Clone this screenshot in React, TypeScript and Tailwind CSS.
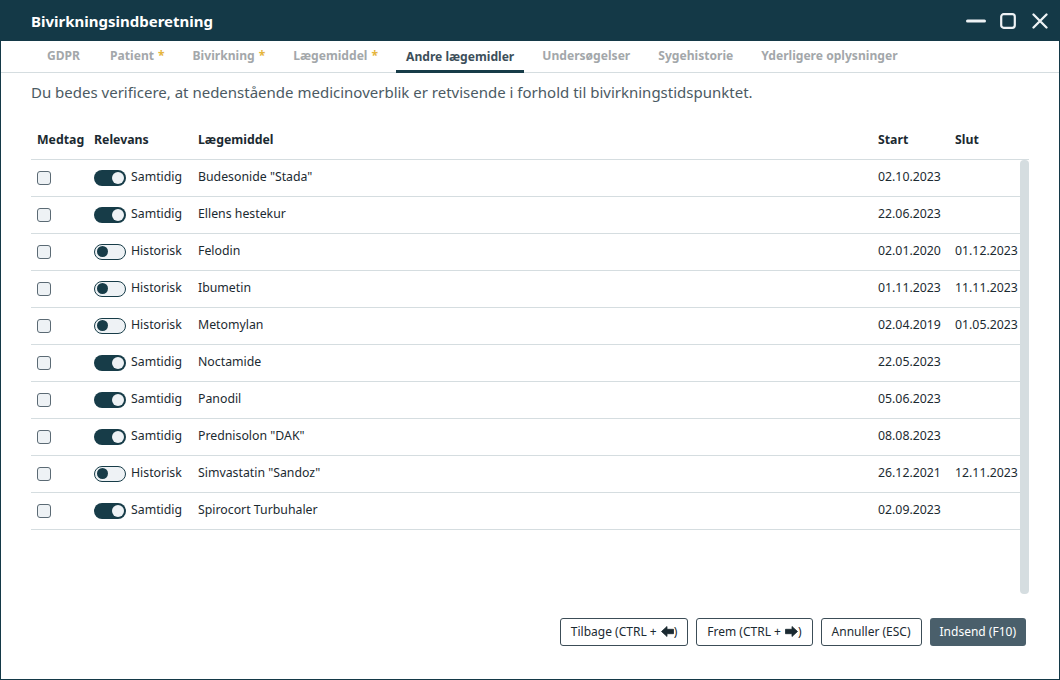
type Row = { name: string; on: boolean; start: string; end?: string };

const rows: Row[] = [
  { name: 'Budesonide "Stada"', on: true, start: "02.10.2023" },
  { name: "Ellens hestekur", on: true, start: "22.06.2023" },
  { name: "Felodin", on: false, start: "02.01.2020", end: "01.12.2023" },
  { name: "Ibumetin", on: false, start: "01.11.2023", end: "11.11.2023" },
  { name: "Metomylan", on: false, start: "02.04.2019", end: "01.05.2023" },
  { name: "Noctamide", on: true, start: "22.05.2023" },
  { name: "Panodil", on: true, start: "05.06.2023" },
  { name: 'Prednisolon "DAK"', on: true, start: "08.08.2023" },
  { name: 'Simvastatin "Sandoz"', on: false, start: "26.12.2021", end: "12.11.2023" },
  { name: "Spirocort Turbuhaler", on: true, start: "02.09.2023" },
];

const tabs = [
  { label: "GDPR" },
  { label: "Patient", req: true },
  { label: "Bivirkning", req: true },
  { label: "Lægemiddel", req: true },
  { label: "Andre lægemidler", active: true },
  { label: "Undersøgelser" },
  { label: "Sygehistorie" },
  { label: "Yderligere oplysninger" },
];

const cols = "grid grid-cols-[57px_104px_1fr_77px_71px]";

const Toggle = ({ on }: { on: boolean }) =>
  on ? (
    <span className="flex h-[16px] w-[32px] items-center justify-end rounded-full bg-[#173c48] pr-[2px]">
      <span className="h-[12px] w-[12px] rounded-full bg-[#eef2f5]" />
    </span>
  ) : (
    <span className="flex h-[16px] w-[32px] items-center rounded-full border border-[#173c48] bg-[#eef2f5] pl-[2px]">
      <span className="h-[11px] w-[11px] rounded-full bg-[#173c48]" />
    </span>
  );

const Arrow = ({ left }: { left?: boolean }) => (
  <svg width="13" height="11" viewBox="0 0 13 11" className={left ? "ml-[4px]" : "ml-[4px] rotate-180"}>
    <path d="M0.5 5.5 L6 0.5 L6 3.3 L12.5 3.3 L12.5 7.7 L6 7.7 L6 10.5 Z" fill="#1b2a31" strokeLinejoin="round" stroke="#1b2a31" strokeWidth="0.8" />
  </svg>
);

export default function App() {
  return (
    <div
      className="flex h-[680px] w-[1060px] flex-col border border-[#143947] bg-white text-[#1b2a31]"
      style={{ fontFamily: '"Segoe UI", "Noto Sans", sans-serif' }}
    >
      <div className="flex h-[40px] shrink-0 items-center justify-between bg-[#143947] pl-[30px] pr-[11px] text-white">
        <span className="text-[15px] font-bold">Bivirkningsindberetning</span>
        <div className="flex items-center">
          <svg width="20" height="20" viewBox="0 0 20 20">
            <path d="M1.5 10h17" stroke="#eef2f5" strokeWidth="3" strokeLinecap="round" />
          </svg>
          <svg width="16" height="16" viewBox="0 0 16 16" className="ml-[14px]">
            <rect x="1.2" y="1.2" width="13.6" height="13.6" rx="2.5" fill="none" stroke="#eef2f5" strokeWidth="2.2" />
          </svg>
          <svg width="16" height="16" viewBox="0 0 16 16" className="ml-[16px]">
            <path d="M1.5 1.5l13 13M14.5 1.5l-13 13" stroke="#eef2f5" strokeWidth="2.3" strokeLinecap="round" />
          </svg>
        </div>
      </div>

      <div className="flex h-[32px] shrink-0 items-stretch gap-[8px] whitespace-nowrap border-b border-[#d5dde0] pl-[36px] pr-[36px] text-[12.1px] font-bold">
        {tabs.map((t, i) => (
          <div
            key={t.label}
            className={
              t.active
                ? "-mb-px flex items-center border-b-[3px] border-[#173c48] px-[10px] pt-[3px] text-[#3d4f5a]"
                : i === 1
                  ? "ml-[2px] flex items-center px-[10px] text-[#a3a7aa]"
                  : "flex items-center px-[10px] text-[#a3a7aa]"
            }
          >
            {t.label}
            {t.req && <span className="ml-[4px] text-[#e5b53c]">*</span>}
          </div>
        ))}
      </div>

      <div className="flex flex-1 flex-col px-[30px]">
        <p className="pt-[8px] text-[15px] text-[#4b5a63]">
          Du bedes verificere, at nedenstående medicinoverblik er retvisende i forhold til bivirkningstidspunktet.
        </p>

        <div className={`${cols} mt-[18px] h-[38px] items-center border-b border-[#d5dde0] pr-[9px] text-[12.3px] font-bold`}>
          <div className="pl-[6px]">Medtag</div>
          <div className="pl-[6px]">Relevans</div>
          <div className="pl-[6px]">Lægemiddel</div>
          <div className="pl-[6px]">Start</div>
          <div className="pl-[6px]">Slut</div>
        </div>

        <div className="flex h-[434px]">
          <div className="flex-1">
            {rows.map((r) => (
              <div key={r.name} className={`${cols} h-[37px] items-center border-b border-[#d5dde0] text-[12.3px]`}>
                <div className="pl-[6px]">
                  <span className="block h-[14px] w-[14px] rounded-[3px] border border-[#5b6a74] bg-[#eef2f5]" />
                </div>
                <div className="flex items-center gap-[5px] pl-[6px]">
                  <Toggle on={r.on} />
                  <span>{r.on ? "Samtidig" : "Historisk"}</span>
                </div>
                <div className="pl-[6px]">{r.name}</div>
                <div className="pl-[6px]">{r.start}</div>
                <div className="pl-[6px]">{r.end}</div>
              </div>
            ))}
          </div>
          <div className="w-[9px] rounded-[4px] bg-[#d5dde0]" />
        </div>

        <div className="mt-[24px] flex justify-end gap-[8px] pr-[3px] text-[12px]">
          <button className="flex h-[28px] items-center rounded-[3px] border border-[#3c4d57] px-[10px]">
            Tilbage (CTRL +<Arrow left />)
          </button>
          <button className="flex h-[28px] items-center rounded-[3px] border border-[#3c4d57] px-[10px]">
            Frem (CTRL +<Arrow />)
          </button>
          <button className="flex h-[28px] items-center rounded-[3px] border border-[#3c4d57] px-[10px]">
            Annuller (ESC)
          </button>
          <button className="flex h-[28px] items-center rounded-[3px] bg-[#4a5f6b] px-[10px] text-white">
            Indsend (F10)
          </button>
        </div>
      </div>
    </div>
  );
}
